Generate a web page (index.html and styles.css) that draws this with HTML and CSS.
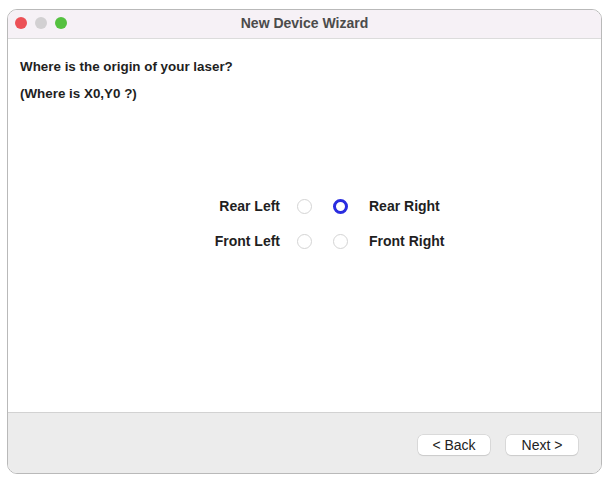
FILE: index.html
```html
<!DOCTYPE html>
<html>
<head>
<meta charset="utf-8">
<link rel="stylesheet" href="styles.css">
</head>
<body>
<div class="window">
  <div class="titlebar">
    <div class="lights">
      <span class="light red"></span>
      <span class="light gray"></span>
      <span class="light green"></span>
    </div>
    <div class="title">New Device Wizard</div>
  </div>
  <div class="content">
    <p class="q1">Where is the origin of your laser?</p>
    <p class="q2">(Where is X0,Y0 ?)</p>
    <div class="grid">
      <span class="lbl left">Rear Left</span>
      <span class="radio"></span>
      <span class="radio on"></span>
      <span class="lbl">Rear Right</span>
      <span class="lbl left">Front Left</span>
      <span class="radio"></span>
      <span class="radio"></span>
      <span class="lbl">Front Right</span>
    </div>
  </div>
  <div class="footer">
    <button class="btn">&lt; Back</button>
    <button class="btn">Next &gt;</button>
  </div>
</div>
</body>
</html>
```
FILE: styles.css
```css
html, body { margin: 0; padding: 0; background: #ffffff; }
body { font-family: "Liberation Sans", Arial, sans-serif; }
.window {
  margin: 9px 0 0 7px;
  width: 593px;
  height: 463px;
  border: 1px solid #b9b9b9;
  border-radius: 10px;
  overflow: hidden;
  display: flex;
  flex-direction: column;
  background: #ffffff;
}
.titlebar {
  height: 28px;
  background: #f6f1f6;
  border-bottom: 1px solid #dcdcdc;
  position: relative;
  display: flex;
  align-items: center;
  justify-content: center;
}
.lights {
  position: absolute;
  left: 7px;
  top: 7px;
  display: flex;
  gap: 8px;
}
.light { width: 12px; height: 12px; border-radius: 50%; display: block; }
.red { background: #ec5056; }
.gray { background: #d2d0d2; }
.green { background: #55c140; }
.title { font-size: 14px; font-weight: bold; color: #4b4b4b; margin-bottom: 3px; }
.content { flex: 1; padding: 0 0 0 12px; }
.q1, .q2 { margin: 0; font-size: 13.4px; font-weight: bold; color: #1f1f1f; line-height: 16px; }
.q1 { margin-top: 20px; }
.q2 { margin-top: 11px; }
.grid {
  margin: 97px 0 0 182px;
  display: grid;
  grid-template-columns: 74px 15px 15px auto;
  column-gap: 21px;
  row-gap: 20px;
  align-items: center;
  width: max-content;
}
.lbl { font-size: 14px; font-weight: bold; color: #1f1f1f; line-height: 15px; }
.lbl.left { text-align: right; margin-right: -4px; }
.radio {
  width: 13px; height: 13px;
  border: 1px solid #d4d4d4;
  border-radius: 50%;
  background: #fff;
  display: block;
}
.radio.on {
  width: 9px; height: 9px;
  border: 3px solid #2a2de0;
}
.footer {
  height: 61px;
  background: #ececec;
  border-top: 1px solid #d2d2d2;
  display: flex;
  justify-content: flex-end;
  align-items: flex-start;
  gap: 16px;
  padding: 22px 23px 0 0;
  box-sizing: border-box;
}
.btn {
  width: 72px;
  height: 20px;
  border: none;
  border-radius: 5px;
  background: #ffffff;
  box-shadow: 0 0 0 0.5px #c8c8c8, 0 1px 1px rgba(0,0,0,0.12);
  font-family: "Liberation Sans", Arial, sans-serif;
  font-size: 14px;
  color: #222;
  padding: 0;
}
```
